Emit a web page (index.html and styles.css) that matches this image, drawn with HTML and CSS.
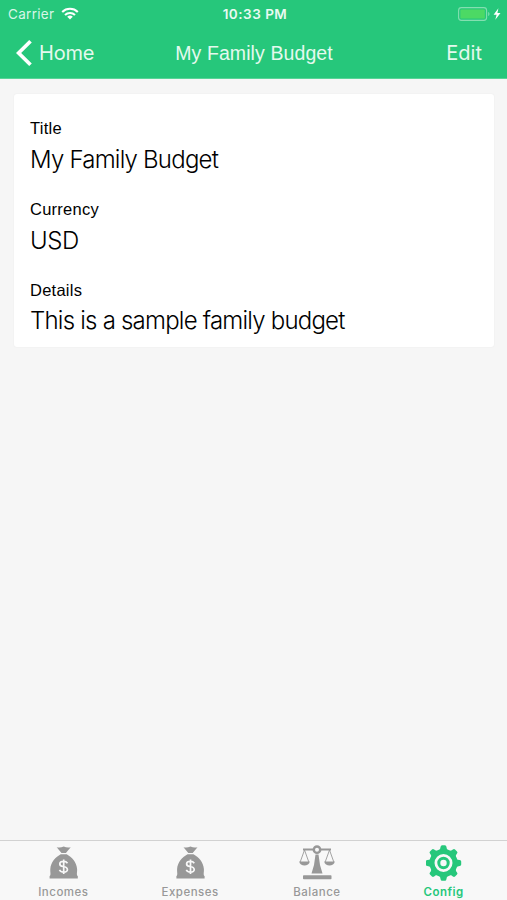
FILE: index.html
```
<!DOCTYPE html>
<html lang="en">
<head>
    <meta charset="UTF-8">
    <title>My Family Budget</title>
    <link rel="stylesheet" href="styles.css">
</head>
<body>

<header class="header">
    <div class="status-bar">
        <div class="carrier">
            <span>Carrier</span>
            <svg class="wifi" width="18" height="13" viewBox="0 0 18 13">
                <path d="M1.2 4.9a11.3 11.3 0 0 1 15.6 0M4 8a7.3 7.3 0 0 1 10 0" fill="none" stroke="#fff" stroke-width="2.1"/>
                <path d="M9 12.5 6.2 9.8a4 4 0 0 1 5.6 0z" fill="#fff"/>
            </svg>
        </div>
        <span class="time">10:33 PM</span>
        <div class="power">
            <svg width="44" height="14" viewBox="0 0 44 14">
                <rect x=".6" y=".6" width="28" height="12.8" rx="2.8" fill="none" stroke="#83dfb0" stroke-width="1.1"/>
                <rect x="2.4" y="2.4" width="24.4" height="9.2" rx="1.2" fill="#4cd964"/>
                <path d="M30.2 5v4c1.7-.4 1.7-3.6 0-4z" fill="#83dfb0"/>
                <path d="M40.4 1.2 35.6 7.8h3L37.3 12.8l5.2-6.9h-3.1z" fill="#fff"/>
            </svg>
        </div>
    </div>
    <nav class="nav-bar">
        <a class="back">
            <svg width="17" height="28" viewBox="0 0 17 28">
                <path d="M14.5 2.2 2.6 14l11.9 11.8" fill="none" stroke="#fff" stroke-width="3.7"/>
            </svg>
            <span>Home</span>
        </a>
        <h1>My Family Budget</h1>
        <a class="edit">Edit</a>
    </nav>
</header>

<main class="content">
    <dl class="card">
        <div class="field">
            <dt>Title</dt>
            <dd>My Family Budget</dd>
        </div>
        <div class="field">
            <dt>Currency</dt>
            <dd class="code">USD</dd>
        </div>
        <div class="field">
            <dt>Details</dt>
            <dd>This is a sample family budget</dd>
        </div>
    </dl>
</main>

<footer class="tab-bar">
    <a class="tab">
        <svg width="36" height="36" viewBox="-.7 0 36 36">
            <path d="M11 2.2q3.500 1 7-.8 3.500 1.800 7 .8L20.200 8h-4.400z" fill="currentColor"/>
            <path d="M15 9.200h6c5 2.800 10 7.900 10.400 14.800.2 3.800-.9 6 .7 7.100v2.400H3.900v-2.400c1.600-1.100.5-3.300.7-7.100C5 17.100 10 12 15 9.200z" fill="currentColor"/>
            <path d="M21.800 18.200c-1-1.400-2.300-1.800-3.800-1.800-5 0-5.200 4.400-.5 5.100 5.500.8 5.600 5.600.5 5.600-2 0-3.400-.8-4.200-2.300M18 14.500v14.500" fill="none" stroke="#f8f8f8" stroke-width="1.700"/>
        </svg>
        <span>Incomes</span>
    </a>
    <a class="tab">
        <svg width="36" height="36" viewBox="-.5 0 36 36">
            <path d="M11 2.200q3.500 1 7-.8 3.500 1.800 7 .8L20.200 8h-4.400z" fill="currentColor"/>
            <path d="M15 9.200h6c5 2.800 10 7.900 10.400 14.800.2 3.800-.9 6 .7 7.100v2.400H3.900v-2.400c1.600-1.100.5-3.300.7-7.100C5 17.100 10 12 15 9.200z" fill="currentColor"/>
            <path d="M21.800 18.200c-1-1.400-2.300-1.800-3.800-1.800-5 0-5.200 4.400-.5 5.100 5.500.8 5.600 5.600.5 5.600-2 0-3.400-.8-4.200-2.300M18 14.500v14.500" fill="none" stroke="#f8f8f8" stroke-width="1.700"/>
        </svg>
        <span>Expenses</span>
    </a>
    <a class="tab">
        <svg width="36" height="36" viewBox="0 0 36 36">
            <path d="M4 4.500h10M22 4.500h10" stroke="currentColor" stroke-width="1.900"/>
            <circle cx="18" cy="4.700" r="3.200" fill="none" stroke="currentColor" stroke-width="2.400"/>
            <path d="M5.500 5 1.200 17M5.500 5l4.300 12M30.500 5l-4.300 12M30.500 5l4.300 12" fill="none" stroke="currentColor" stroke-width=".9"/>
            <path d="M.2 16.500h10.600c-.6 5.200-10 5.200-10.600 0zM25.200 16.500h10.600c-.6 5.200-10 5.200-10.600 0z" fill="currentColor"/>
            <path d="M16.500 9.500h3l1.500 10.500 2.500 8.500h-11l2.500-8.500z" fill="currentColor"/>
            <rect x="4" y="30.300" width="28.500" height="4" rx=".8" fill="currentColor"/>
        </svg>
        <span>Balance</span>
    </a>
    <a class="tab active">
        <svg width="36" height="36" viewBox="-17.500 -18 36 36">
            <circle r="11.500" fill="none" stroke="currentColor" stroke-width="5"/>
            <g fill="currentColor">
                <path id="tooth" d="M-4.600-12.500Q-3-14-2.900-16.200q.1-1.500 1.500-1.500h2.800q1.400 0 1.500 1.500Q3-14 4.600-12.500z"/>
                <use href="#tooth" transform="rotate(45)"/>
                <use href="#tooth" transform="rotate(90)"/>
                <use href="#tooth" transform="rotate(135)"/>
                <use href="#tooth" transform="rotate(180)"/>
                <use href="#tooth" transform="rotate(225)"/>
                <use href="#tooth" transform="rotate(270)"/>
                <use href="#tooth" transform="rotate(315)"/>
            </g>
            <circle r="4.700" fill="none" stroke="currentColor" stroke-width="3"/>
        </svg>
        <span>Config</span>
    </a>
</footer>

</body>
</html>
```
FILE: styles.css
```
* {
    box-sizing: border-box;
}

body {
    margin: 0;
    height: 900px;
    display: flex;
    flex-direction: column;
    background: #f6f6f6;
    color: #000;
    font-family: Inter, "Liberation Sans", sans-serif;
}

.header {
    height: 79px;
    background: #26c77b;
    border-bottom: 1px solid #58d497;
    color: #fff;
}

.status-bar,
.nav-bar {
    display: grid;
    grid-template-columns: 1fr auto 1fr;
    align-items: center;
}

.status-bar {
    height: 27px;
    padding: 0 5px 0 8px;
    font-size: 13.5px;
}

.carrier {
    display: flex;
    align-items: center;
    gap: 7px;
    color: #d8f6e7;
    letter-spacing: 0.3px;
}

.wifi {
    display: block;
}

.time {
    font-weight: 600;
    letter-spacing: 0.5px;
    color: #eafaf2;
}

.power {
    display: flex;
    justify-content: flex-end;
}

.nav-bar {
    height: 51px;
    padding: 0 25px 0 26px;
}

.back {
    display: flex;
    align-items: center;
    gap: 6px;
    margin-left: -10px;
    font-size: 20px;
    letter-spacing: -0.2px;
    color: #e4f9ee;
}

.nav-bar h1 {
    margin: 2px 0 0;
    font-family: "Liberation Sans", Arial, sans-serif;
    font-size: 19.5px;
    font-weight: normal;
    letter-spacing: 0.1px;
    color: #e4f9ee;
}

.edit {
    text-align: right;
    font-size: 20px;
    color: #e4f9ee;
}

.content {
    flex: 1;
    padding: 15px 13px 0 14px;
}

.card {
    margin: 0;
    height: 253px;
    padding: 23.4px 16px 0;
    background: #fff;
    border-radius: 3px;
    box-shadow: 0 0 2px rgba(0, 0, 0, 0.06);
}

.field {
    height: 80.6px;
}

.field dt {
    font-family: "Liberation Sans", Arial, sans-serif;
    font-size: 16.5px;
    line-height: 22px;
    letter-spacing: 0.25px;
}

.field dd {
    margin: 4.6px 0 0;
    font-size: 24px;
    font-weight: 300;
    line-height: 32px;
    letter-spacing: -0.78px;
    white-space: nowrap;
}

.field .code {
    letter-spacing: -0.4px;
}

.tab-bar {
    display: flex;
    height: 60px;
    background: #f8f8f8;
    border-top: 1px solid #d2d2d2;
}

.tab {
    flex: 1;
    display: flex;
    flex-direction: column;
    align-items: center;
    padding-top: 4px;
    color: #989898;
    font-size: 11.5px;
    font-weight: 500;
    letter-spacing: 0.5px;
}

.tab span {
    margin-top: 3px;
    line-height: 16px;
}

.active {
    color: #26c77b;
    font-weight: 600;
}
```
